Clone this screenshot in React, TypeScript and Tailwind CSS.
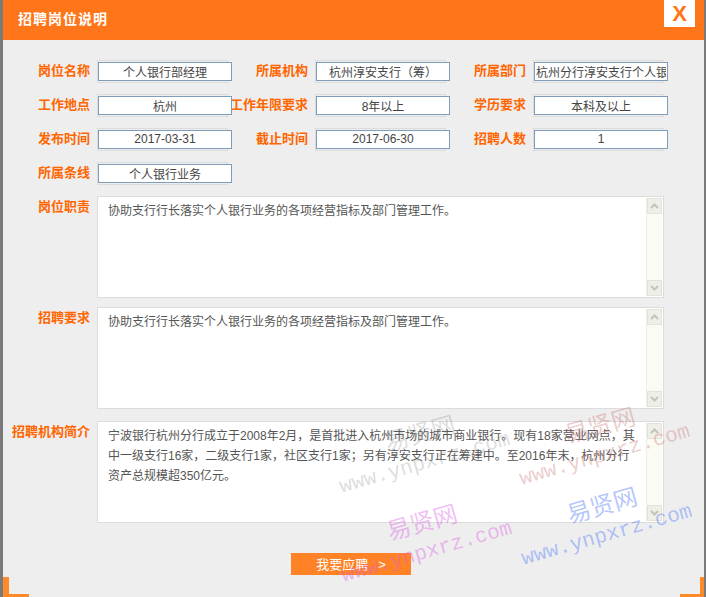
import React from 'react';

const FONT = '"Liberation Sans", "Noto Sans CJK SC", sans-serif';

type Field = { label: string; value: string };

const rows: Field[][] = [
  [
    { label: '岗位名称', value: '个人银行部经理' },
    { label: '所属机构', value: '杭州淳安支行（筹）' },
    { label: '所属部门', value: '杭州分行淳安支行个人银行部' },
  ],
  [
    { label: '工作地点', value: '杭州' },
    { label: '工作年限要求', value: '8年以上' },
    { label: '学历要求', value: '本科及以上' },
  ],
  [
    { label: '发布时间', value: '2017-03-31' },
    { label: '截止时间', value: '2017-06-30' },
    { label: '招聘人数', value: '1' },
  ],
  [{ label: '所属条线', value: '个人银行业务' }],
];

function Label({ text }: { text: string }) {
  return (
    <div className="w-[76px] shrink-0 flex justify-end">
      <span className="whitespace-nowrap text-[13px] font-bold text-[#ff6600] leading-[20px]">{text}</span>
    </div>
  );
}

function Chevron({ up }: { up?: boolean }) {
  return (
    <svg width="9" height="6" viewBox="0 0 9 6">
      <path
        d={up ? 'M1 5 L4.5 1.5 L8 5' : 'M1 1 L4.5 4.5 L8 1'}
        fill="none"
        stroke="#c4c4bc"
        strokeWidth="2"
      />
    </svg>
  );
}

// 假滚动条
function FakeScroll() {
  return (
    <div className="absolute right-0 top-0 bottom-0 w-[16px] bg-[#fbfbf3] border-l border-[#efefe6] flex flex-col justify-between">
      <div className="h-[16px] bg-[#efefe7] border border-[#e3e3da] flex items-center justify-center">
        <Chevron up />
      </div>
      <div className="h-[16px] bg-[#efefe7] border border-[#e3e3da] flex items-center justify-center">
        <Chevron />
      </div>
    </div>
  );
}

function TextBox({ label, lines, className }: { label: string; lines: string[]; className: string }) {
  return (
    <div className={`flex pl-[11px] ${className}`}>
      <div className="pt-[1px]">
        <Label text={label} />
      </div>
      <div className="ml-[7px] relative w-[567px] h-[102px] bg-white border border-[#dcdcdc] p-[1px]">
        <div className="pl-[9px] pt-[3px] text-[12px] leading-[20px] text-[#555]">
          {lines.map((l, i) => (
            <div key={i} className="whitespace-nowrap">
              {l}
            </div>
          ))}
        </div>
        <div className="absolute right-[1px] top-[1px] bottom-[1px] w-[16px]">
          <FakeScroll />
        </div>
      </div>
    </div>
  );
}

function Watermark({ x, y, color, angle }: { x: number; y: number; color: string; angle: number }) {
  return (
    <>
      <div
        className="absolute text-[24px] leading-none whitespace-nowrap origin-[0_50%]"
        style={{ left: x + 45, top: y - 47, color, transform: `rotate(${angle}deg)`, fontFamily: '"Noto Sans CJK SC", serif' }}
      >
        易贤网
      </div>
      <div
        className="absolute text-[21px] leading-none whitespace-nowrap origin-[0_50%]"
        style={{ left: x, top: y, color, transform: `rotate(${angle}deg)`, fontFamily: '"Liberation Mono", monospace' }}
      >
        www.ynpxrz.com
      </div>
    </>
  );
}

export default function App() {
  const duty = ['协助支行行长落实个人银行业务的各项经营指标及部门管理工作。'];
  const intro = [
    '宁波银行杭州分行成立于2008年2月，是首批进入杭州市场的城市商业银行。现有18家营业网点，其',
    '中一级支行16家，二级支行1家，社区支行1家；另有淳安支行正在筹建中。至2016年末，杭州分行',
    '资产总规模超350亿元。',
  ];

  return (
    <div className="relative w-[706px] h-[597px] bg-[#7a7a7a] flex overflow-hidden" style={{ fontFamily: FONT }}>
      <div className="ml-[3px] w-[701px] h-full bg-[#eeeeee] relative flex flex-col">
        {/* 标题栏 */}
        <div className="h-[40px] bg-[#ff7519] flex items-start justify-between shrink-0">
          <div className="pl-[15px] pt-[10px] text-[14px] font-bold text-white tracking-[1px] leading-[18px]">招聘岗位说明</div>
          <div className="mr-[9px] w-[31px] h-[27px] bg-white flex items-center justify-center text-[#ff7519] text-[22px] font-bold leading-none">
            X
          </div>
        </div>

        {/* 基本信息 */}
        <div className="pt-[14px] flex flex-col">
          {rows.map((row, ri) => (
            <div key={ri} className="h-[34px] flex items-center pl-[11px]">
              {row.map((f) => (
                <div key={f.label} className="flex items-center">
                  <Label text={f.label} />
                  <div className="ml-[7px] mr-[4px] w-[131px] h-[23px] border border-[#dcdcdc] relative">
                    <input
                      readOnly
                      value={f.value}
                      className="absolute left-0 top-[1px] w-[134px] h-[19px] bg-white border border-[#7f9db9] px-[1px] text-center text-[12px] text-[#444] outline-none"
                      style={{ fontFamily: FONT }}
                    />
                  </div>
                </div>
              ))}
            </div>
          ))}
        </div>

        <TextBox label="岗位职责" lines={duty} className="mt-[6px]" />
        <TextBox label="招聘要求" lines={duty} className="mt-[9px]" />
        <TextBox label="招聘机构简介" lines={intro} className="mt-[12px]" />

        <div className="mt-[30px] flex justify-center pr-[5px]">
          <button className="w-[120px] h-[22px] bg-[#ff8326] text-white text-[13px] leading-none flex items-center justify-center gap-[10px]">
            <span>我要应聘</span>
            <span>&gt;</span>
          </button>
        </div>

        {/* 底部角标 */}
        <div className="absolute left-0 bottom-0 w-[26px] h-[20px] border-l-[6px] border-b-[3px] border-[#ff8a2a]" />
        <div className="absolute right-0 bottom-0 w-[24px] h-[20px] border-r-[4px] border-b-[3px] border-[#ff8a2a]" />
      </div>

      {/* 水印 */}
      <Watermark x={340} y={477} color="rgba(140,140,140,0.3)" angle={-16} />
      <Watermark x={520} y={469} color="rgba(200,110,110,0.35)" angle={-16} />
      <Watermark x={342} y={566} color="rgba(220,90,230,0.4)" angle={-16} />
      <Watermark x={522} y={549} color="rgba(90,130,245,0.45)" angle={-16} />
    </div>
  );
}
